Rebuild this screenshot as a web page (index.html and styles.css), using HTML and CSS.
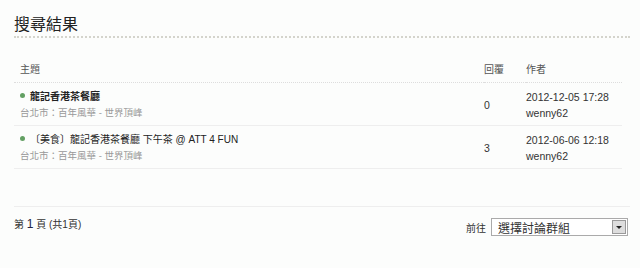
FILE: index.html
```html
<!DOCTYPE html>
<html lang="zh-Hant">
<head>
    <meta charset="UTF-8">
    <title>搜尋結果</title>
    <link rel="stylesheet" href="styles.css">
</head>
<body>
    <div class="page">
        <h2 class="title">搜尋結果</h2>

        <table class="results">
            <thead>
                <tr>
                    <th class="col-topic">主題</th>
                    <th class="col-reply">回覆</th>
                    <th class="col-author">作者</th>
                </tr>
            </thead>
            <tbody>
                <tr>
                    <td>
                        <div class="topic"><span class="dot"></span>龍記香港茶餐廳</div>
                        <div class="forum">台北市：百年風華 - 世界頂峰</div>
                    </td>
                    <td class="replies">0</td>
                    <td class="author">
                        <div>2012-12-05 17:28</div>
                        <div>wenny62</div>
                    </td>
                </tr>
                <tr>
                    <td>
                        <div class="topic"><span class="dot"></span><span class="plain">〔美食〕龍記香港茶餐廳 下午茶 @ ATT 4 FUN</span></div>
                        <div class="forum">台北市：百年風華 - 世界頂峰</div>
                    </td>
                    <td class="replies">3</td>
                    <td class="author">
                        <div>2012-06-06 12:18</div>
                        <div>wenny62</div>
                    </td>
                </tr>
            </tbody>
        </table>

        <div class="footer">
            <div class="pages">第 <span class="current">1</span> 頁 (共1頁)</div>
            <div class="jump">
                前往
                <div class="select">
                    <span>選擇討論群組</span>
                    <span class="arrow"></span>
                </div>
            </div>
        </div>
    </div>
</body>
</html>
```

FILE: styles.css
```css
body {
    margin: 0;
    background: #fcfdfc;
    font-family: "Liberation Sans", "Noto Sans CJK TC", sans-serif;
    font-size: 10px;
    color: #333;
}
.page {
    width: 616px;
    padding: 15px 0 0 14px;
}
.title {
    margin: 0;
    font-size: 16px;
    font-weight: normal;
    color: #222;
    line-height: 20px;
    padding-bottom: 1px;
    border-bottom: 2px dotted #d4d4cc;
}
.results {
    width: 608px;
    margin-top: 20px;
    border-collapse: collapse;
}
.results th {
    font-weight: normal;
    color: #555;
    text-align: left;
    height: 19px;
    vertical-align: bottom;
    padding: 0 0 5px;
    line-height: 14px;
    border-bottom: 1px dotted #ddd;
}
.results td {
    padding: 6px 0 4px;
    line-height: 16px;
    border-bottom: 1px solid #eee;
    vertical-align: top;
}
.col-topic { padding-left: 6px !important; }
.results td:first-child { padding-left: 6px; }
.col-reply { width: 42px; }
.col-author { width: 96px; }
.replies {
    vertical-align: middle !important;
    font-size: 10.5px;
}
.author { font-size: 10.5px; }
.topic {
    font-weight: bold;
    color: #222;
}
.plain { font-weight: normal; }
.dot {
    display: inline-block;
    width: 5px;
    height: 5px;
    border-radius: 50%;
    background: #63a063;
    margin-right: 5px;
    vertical-align: 2px;
}
.forum { color: #999; font-size: 9.5px; }
.footer {
    margin-top: 37px;
    border-top: 1px solid #eee;
    display: flex;
    justify-content: space-between;
    align-items: flex-start;
    padding-top: 11px;
}
.pages {
    font-size: 10px;
    color: #333;
    line-height: 16px;
    margin-top: -2px;
}
.current { color: #224; font-size: 12px; }
.jump {
    display: flex;
    align-items: center;
    gap: 5px;
    margin-right: 2px;
}
.select {
    height: 16px;
    border: 1px solid #aaa;
    background: #fff;
    display: flex;
    justify-content: space-between;
    align-items: center;
    font-size: 12px;
    padding-left: 6px;
    width: 129px;
}
.arrow {
    width: 14px;
    height: 14px;
    margin-right: 1px;
    background: #ddd;
    border: 1px solid #999;
    box-sizing: border-box;
    position: relative;
}
.arrow::after {
    content: "";
    position: absolute;
    left: 3px;
    top: 5px;
    border-left: 3px solid transparent;
    border-right: 3px solid transparent;
    border-top: 3px solid #222;
}
```
